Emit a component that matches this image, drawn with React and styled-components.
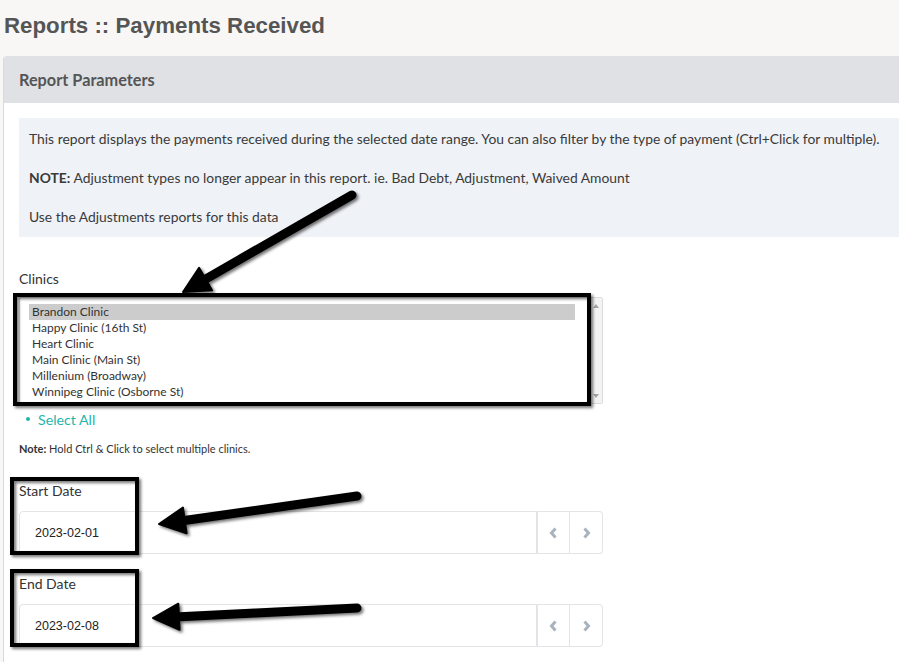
import React from "react";
import styled, { createGlobalStyle } from "styled-components";

const GlobalStyle = createGlobalStyle`
  html, body { margin: 0; padding: 0; }
  body {
    background: #f8f7f5;
    font-family: Lato, "Noto Sans", sans-serif;
    overflow: hidden;
  }
`;

const Page = styled.div`
  position: relative;
  height: 662px;
  display: flex;
  flex-direction: column;
  overflow: hidden;
`;

const Title = styled.h1`
  margin: 0;
  height: 56px;
  box-sizing: border-box;
  padding: 13px 0 0 4px;
  font-family: "Liberation Sans", Arial, sans-serif;
  font-size: 22.3px;
  line-height: 26px;
  font-weight: 700;
  color: #555555;
`;

const Card = styled.section`
  flex: 1;
  margin-left: 3px;
  display: flex;
  flex-direction: column;
  border-left: 1px solid #d9dadd;
  border-top-left-radius: 4px;
  overflow: hidden;
  background: #ffffff;
`;

const CardHeader = styled.header`
  height: 47px;
  display: flex;
  align-items: center;
  padding-left: 15px;
  background: #dfe1e5;
  font-size: 16.3px;
  font-weight: 700;
  color: #555555;
`;

const CardBody = styled.div`
  flex: 1;
  padding: 15px 0 0 15px;
  background: #ffffff;
`;

const InfoBox = styled.div`
  background: #eff2f7;
  padding: 11px 10px 11px;
  font-size: 13.85px;
  line-height: 19px;
  color: #3a3a3a;
  white-space: nowrap;
`;

const InfoText = styled.p`
  margin: 0 0 ${(p) => (p.$last ? "0" : "20px")};
`;

const Label = styled.div`
  font-size: 14px;
  line-height: 18px;
  color: #333333;
  margin-top: ${(p) => p.$top}px;
  margin-bottom: ${(p) => p.$bottom}px;
`;

const ListBox = styled.div`
  width: 584px;
  height: 107px;
  box-sizing: border-box;
  border: 1px solid #dcdcdc;
  border-radius: 2px;
  display: flex;
  padding-left: 9px;
  gap: 14px;
`;

const Options = styled.div`
  flex: 1;
  margin-top: 6px;
`;

const Option = styled.div`
  height: 16px;
  line-height: 16px;
  padding-left: 3px;
  font-size: 12px;
  color: #333333;
  background: ${(p) => (p.$selected ? "#cccccc" : "transparent")};
`;

const Scrollbar = styled.div`
  width: 12px;
  background: #f3f3f3;
  border-left: 1px solid #e6e6e6;
  display: flex;
  flex-direction: column;
  justify-content: space-between;
  align-items: center;
  padding: 6px 0 5px;
`;

const ScrollArrow = styled.span`
  width: 0;
  height: 0;
  border-left: 3.5px solid transparent;
  border-right: 3.5px solid transparent;
  ${(p) =>
    p.$down
      ? "border-top: 4px solid #a3a3a3;"
      : "border-bottom: 4px solid #a3a3a3;"}
`;

const SelectAll = styled.div`
  margin-top: 5px;
  display: flex;
  align-items: center;
  height: 20px;
  padding-left: 7px;
  gap: 8px;
  font-size: 14.2px;
  color: #1fb5ac;
`;

const Dot = styled.span`
  width: 4px;
  height: 4px;
  border-radius: 50%;
  background: #1fb5ac;
`;

const Note = styled.div`
  margin-top: 13px;
  font-size: 11px;
  line-height: 14px;
  color: #333333;
  b { font-weight: 700; }
`;

const DateGroup = styled.div`
  display: flex;
  width: 584px;
  height: 43px;
`;

const DateInput = styled.div`
  flex: 1;
  box-sizing: border-box;
  border: 1px solid #e3e4e8;
  border-radius: 4px 0 0 4px;
  display: flex;
  align-items: center;
  padding-left: 15px;
  font-family: "Liberation Sans", Arial, sans-serif;
  font-size: 12.5px;
  color: #222222;
`;

const NavButton = styled.div`
  width: 33px;
  box-sizing: border-box;
  border: 1px solid #e3e4e8;
  border-left: ${(p) => (p.$first ? "1px solid #e3e4e8" : "none")};
  border-radius: ${(p) => (p.$last ? "0 4px 4px 0" : "0")};
  display: flex;
  align-items: center;
  justify-content: center;
`;

const Overlay = styled.svg`
  position: absolute;
  left: 0;
  top: 0;
  pointer-events: none;
`;

const Chevron = ({ dir }) => (
  <svg width="9" height="12" viewBox="0 0 9 12">
    <polyline
      points={dir === "left" ? "6.5,1.5 2.5,6 6.5,10.5" : "2.5,1.5 6.5,6 2.5,10.5"}
      fill="none"
      stroke="#a9b3bd"
      strokeWidth="3"
    />
  </svg>
);

const clinics = [
  "Brandon Clinic",
  "Happy Clinic (16th St)",
  "Heart Clinic",
  "Main Clinic (Main St)",
  "Millenium (Broadway)",
  "Winnipeg Clinic (Osborne St)",
];

const Arrow = ({ x1, y1, x2, y2 }) => {
  const dx = x2 - x1;
  const dy = y2 - y1;
  const len = Math.hypot(dx, dy);
  const ux = dx / len;
  const uy = dy / len;
  const head = 26;
  const half = 13;
  const bx = x2 - ux * head;
  const by = y2 - uy * head;
  const px = -uy;
  const py = ux;
  const pts = `${x2},${y2} ${bx + px * half},${by + py * half} ${bx - px * half},${by - py * half}`;
  return (
    <g filter="url(#shadow)">
      <line
        x1={x1}
        y1={y1}
        x2={bx + ux * 4}
        y2={by + uy * 4}
        stroke="#000"
        strokeWidth="9"
        strokeLinecap="round"
      />
      <polygon points={pts} fill="#000" stroke="#000" strokeWidth="2" strokeLinejoin="round" />
    </g>
  );
};

const Annotations = () => (
  <Overlay width="899" height="662" viewBox="0 0 899 662">
    <defs>
      <filter id="shadow" x="-20%" y="-20%" width="140%" height="140%">
        <feDropShadow dx="2" dy="2" stdDeviation="1.6" floodColor="#000" floodOpacity="0.55" />
      </filter>
    </defs>
    <g filter="url(#shadow)" fill="none" stroke="#000" strokeWidth="4">
      <rect x="15" y="295" width="574" height="109" />
      <rect x="12" y="479" width="125" height="74" />
      <rect x="12" y="571" width="125" height="74" />
    </g>
    <Arrow x1={352} y1={195} x2={183} y2={292} />
    <Arrow x1={357} y1={496} x2={159} y2={524} />
    <Arrow x1={357} y1={608} x2={153} y2={618} />
  </Overlay>
);

export default function App() {
  return (
    <>
      <GlobalStyle />
      <Page>
        <Title>Reports :: Payments Received</Title>
        <Card>
          <CardHeader>Report Parameters</CardHeader>
          <CardBody>
            <InfoBox>
              <InfoText>
                This report displays the payments received during the selected date range. You can
                also filter by the type of payment (Ctrl+Click for multiple).
              </InfoText>
              <InfoText>
                <b>NOTE:</b> Adjustment types no longer appear in this report. ie. Bad Debt,
                Adjustment, Waived Amount
              </InfoText>
              <InfoText $last>Use the Adjustments reports for this data</InfoText>
            </InfoBox>

            <Label $top={33} $bottom={9}>Clinics</Label>
            <ListBox>
              <Options>
                {clinics.map((c, i) => (
                  <Option key={c} $selected={i === 0}>
                    {c}
                  </Option>
                ))}
              </Options>
              <Scrollbar>
                <ScrollArrow />
                <ScrollArrow $down />
              </Scrollbar>
            </ListBox>
            <SelectAll>
              <Dot />
              Select All
            </SelectAll>
            <Note>
              <b>Note:</b> Hold Ctrl &amp; Click to select multiple clinics.
            </Note>

            <Label $top={26} $bottom={11}>Start Date</Label>
            <DateGroup>
              <DateInput>2023-02-01</DateInput>
              <NavButton $first>
                <Chevron dir="left" />
              </NavButton>
              <NavButton $last>
                <Chevron dir="right" />
              </NavButton>
            </DateGroup>

            <Label $top={21} $bottom={11}>End Date</Label>
            <DateGroup>
              <DateInput>2023-02-08</DateInput>
              <NavButton $first>
                <Chevron dir="left" />
              </NavButton>
              <NavButton $last>
                <Chevron dir="right" />
              </NavButton>
            </DateGroup>
          </CardBody>
        </Card>
        <Annotations />
      </Page>
    </>
  );
}
